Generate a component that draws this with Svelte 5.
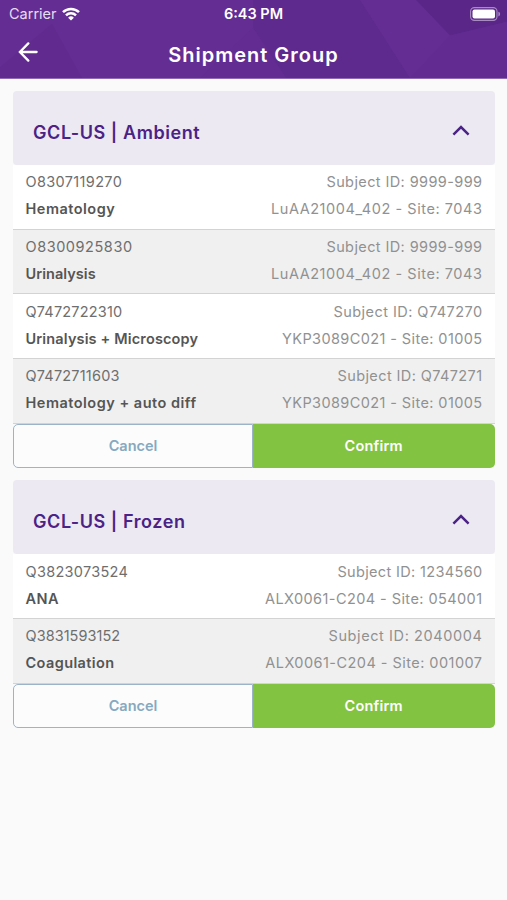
<script>
  // track: letter spacing in px for the id, test, subject and study texts
  let groups = $state([
    {
      name: "GCL-US | Ambient",
      open: true,
      items: [
        { id: "O8307119270", test: "Hematology", subject: "9999-999", study: "LuAA21004_402", site: "7043", track: [0.35, 0.5, 0.4, 0.56] },
        { id: "O8300925830", test: "Urinalysis", subject: "9999-999", study: "LuAA21004_402", site: "7043", track: [0.55, 0.05, 0.4, 0.56] },
        { id: "Q7472722310", test: "Urinalysis + Microscopy", subject: "Q747270", study: "YKP3089C021", site: "01005", track: [0.2, 0.15, 0.45, 0.4] },
        { id: "Q7472711603", test: "Hematology + auto diff", subject: "Q747271", study: "YKP3089C021", site: "01005", track: [0.2, 0.5, 0.4, 0.4] },
      ],
    },
    {
      name: "GCL-US | Frozen",
      open: true,
      items: [
        { id: "Q3823073524", test: "ANA", subject: "1234560", study: "ALX0061-C204", site: "054001", track: [0.3, 0.5, 0.35, 0.43] },
        { id: "Q3831593152", test: "Coagulation", subject: "2040004", study: "ALX0061-C204", site: "001007", track: [0.05, 0.4, 0.6, 0.46] },
      ],
    },
  ]);
</script>

<div class="screen">
  <header>
    <svg class="pattern" viewBox="0 0 507 79" preserveAspectRatio="none" aria-hidden="true">
      <path d="M0 0H507V79H0z" fill="#642d94" />
      <path d="M52 24L82 79H0V68z" fill="#602a8f" />
      <path d="M253 0H360L410 79H286L253 28z" fill="#5e2a8d" />
      <path d="M253 28L286 79H200z" fill="#622c92" />
      <path d="M416 0H507V22L450 36z" fill="#5a2788" />
      <path d="M450 36L507 22V79H410z" fill="#612b91" />
    </svg>

    <div class="status">
      <div class="carrier">
        <span>Carrier</span>
        <svg width="18" height="14" viewBox="0 0 18 14" fill="none" stroke="#fff" stroke-width="2.5">
          <path d="M1 5.2a11.3 11.3 0 0 1 16 0" />
          <path d="M4 8.3a7.1 7.1 0 0 1 10 0" />
          <path d="M9 13.6L6.1 10.7a4.1 4.1 0 0 1 5.8 0z" fill="#fff" stroke="none" />
        </svg>
      </div>
      <span class="time">6:43 PM</span>
      <svg class="battery" width="31" height="14" viewBox="0 0 31 14">
        <rect x="0.6" y="0.6" width="26.4" height="12.8" rx="3.8" fill="none" stroke="#a98bc4" stroke-width="1.1" />
        <rect x="2.5" y="2.5" width="22.5" height="9" rx="2" fill="#fff" />
        <path d="M28.4 4.8a2.4 2.4 0 0 1 0 4.6z" fill="#a98bc4" />
      </svg>
    </div>

    <div class="nav">
      <button class="back" aria-label="Back">
        <svg width="20" height="20" viewBox="0 0 20 20" fill="none" stroke="#fff" stroke-width="2.3" stroke-linecap="round">
          <path d="M10.3 1.4L1.9 10L10.3 18.6M1.9 10H18.6" />
        </svg>
      </button>
      <h1>Shipment Group</h1>
    </div>
  </header>

  <main>
    {#each groups as group}
      <section>
        <button class="group-head" onclick={() => (group.open = !group.open)}>
          <span>{group.name}</span>
          <svg class:closed={!group.open} width="18" height="11" viewBox="0 0 18 11" fill="none" stroke="#4b2285" stroke-width="2.5">
            <path d="M1.4 9.6L9 2L16.6 9.6" />
          </svg>
        </button>
        {#if group.open}
          {#each group.items as item}
            <div class="row">
              <div class="line">
                <span class="id" style="letter-spacing: {item.track[0]}px">{item.id}</span>
                <span class="info" style="letter-spacing: {item.track[2]}px">Subject ID: {item.subject}</span>
              </div>
              <div class="line">
                <span class="test" style="letter-spacing: {item.track[1]}px">{item.test}</span>
                <span class="info" style="letter-spacing: {item.track[3]}px">{item.study} - Site: {item.site}</span>
              </div>
            </div>
          {/each}
          <div class="actions">
            <button class="cancel">Cancel</button>
            <button class="confirm">Confirm</button>
          </div>
        {/if}
      </section>
    {/each}
  </main>
</div>

<style>
  :global(body) {
    margin: 0;
    background: #fafafa;
  }

  .screen {
    min-height: 900px;
    background: #fafafa;
    font-family: Inter, "Open Sans", sans-serif;
  }

  button {
    margin: 0;
    padding: 0;
    border: 0;
    background: none;
    font-family: inherit;
  }

  header {
    position: relative;
    box-sizing: border-box;
    height: 79px;
    border-bottom: 1px solid #8f69b3;
    color: #fff;
    overflow: hidden;
  }

  .pattern {
    position: absolute;
    inset: 0;
    width: 100%;
    height: 100%;
  }

  .status {
    position: relative;
    display: grid;
    grid-template-columns: 1fr auto 1fr;
    align-items: center;
    height: 27px;
    padding: 0 6px 0 9px;
    font-size: 14.5px;
  }

  .carrier {
    display: flex;
    align-items: center;
    gap: 5px;
    color: #e6dcef;
  }

  .time {
    margin-right: 3px;
    font-weight: 600;
  }

  .battery {
    justify-self: end;
  }

  .nav {
    position: relative;
    display: grid;
    grid-template-columns: 50px 1fr 50px;
    align-items: center;
    height: 52px;
  }

  .back {
    display: flex;
    padding-left: 18px;
    margin-top: -2px;
  }

  h1 {
    margin: 4px 0 0;
    font-size: 20px;
    font-weight: 600;
    letter-spacing: 1px;
    line-height: 24px;
    text-align: center;
  }

  main {
    display: flex;
    flex-direction: column;
    gap: 12.5px;
    padding: 12px 12.5px 0 13px;
  }

  .group-head {
    display: flex;
    align-items: center;
    justify-content: space-between;
    box-sizing: border-box;
    width: 100%;
    height: 74px;
    padding: 8px 24.5px 0 20px;
    border-radius: 4px;
    background: #ece9f3;
    color: #4b2285;
    font-size: 18px;
    font-weight: 600;
    letter-spacing: 0.57px;
  }

  .group-head svg {
    margin-top: -4px;
  }

  .closed {
    transform: rotate(180deg);
  }

  .row {
    box-sizing: border-box;
    height: 64.7px;
    padding: 3.4px 12px 0 12.5px;
    border-bottom: 1px solid #d3d3d4;
    background: #fff;
    font-size: 14.5px;
  }

  .row:nth-of-type(even) {
    background: #f0f0f0;
  }

  .line {
    display: flex;
    justify-content: space-between;
    line-height: 27px;
    white-space: nowrap;
  }

  .id {
    color: #6e6e6e;
  }

  .test {
    color: #555;
    font-weight: 600;
  }

  .info {
    color: #919191;
  }

  .actions {
    display: flex;
    height: 44px;
  }

  .actions button {
    font-size: 14.5px;
    font-weight: 600;
  }

  .actions .cancel {
    box-sizing: border-box;
    width: 240px;
    border: 1.5px solid #9db4c8;
    border-radius: 5px 0 0 5px;
    background: #fcfcfc;
    color: #86a9c0;
  }

  .actions .confirm {
    flex: 1;
    border-radius: 0 5px 5px 0;
    background: #82c341;
    color: #fff;
    letter-spacing: 0.2px;
  }
</style>
